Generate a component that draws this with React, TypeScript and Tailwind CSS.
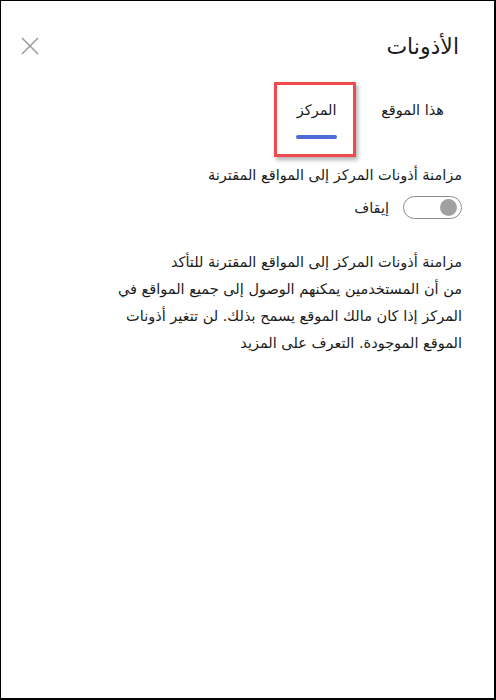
const font = { fontFamily: '"DejaVu Sans", Tahoma, sans-serif' };

export default function App() {
  return (
    <div
      dir="rtl"
      style={font}
      className="relative h-[700px] w-[496px] overflow-hidden border-t border-l border-r-2 border-b-2 border-black bg-white text-[#1b1b1b]"
    >
      {/* Header */}
      <div className="flex items-start justify-between pr-[35px] pl-[20px] pt-[31px]">
        <h1 className="text-[22px] leading-[30px]">الأذونات</h1>
        <button className="mt-[5px] text-[#9a9a9a]" aria-label="إغلاق">
          <svg width="18" height="18" viewBox="0 0 18 18" fill="none" stroke="currentColor" strokeWidth="1.5">
            <path d="M1 1L17 17M17 1L1 17" />
          </svg>
        </button>
      </div>

      {/* Tabs */}
      <div className="mt-[36px] flex gap-[44px] pr-[50px] text-[14.5px]">
        <div className="flex flex-col items-center">
          <span className="leading-[24px]">هذا الموقع</span>
        </div>
        <div className="relative flex flex-col items-center">
          <span className="leading-[24px]">المركز</span>
          <span className="mt-[13px] h-[4px] w-[41px] rounded-full bg-[#4f6bd8]" />
          {/* annotation highlight */}
          <div className="absolute -top-[16px] -left-[22px] h-[75px] w-[82px] border-[3px] border-[#f04a4e] shadow-[2px_3px_4px_rgba(0,0,0,0.3)]" />
        </div>
      </div>

      {/* Sync setting */}
      <div className="mt-[25px] pr-[32px] text-[14.5px]">
        <p className="leading-[22px]">مزامنة أذونات المركز إلى المواقع المقترنة</p>
        <div className="mt-[10px] flex items-center gap-[14px]">
          <div className="flex h-[23px] w-[59px] items-center justify-start rounded-full border border-[#8c8c8c] pr-[4px]">
            <span className="h-[17px] w-[17px] rounded-full bg-[#a0a0a0]" />
          </div>
          <span className="leading-[22px]">إيقاف</span>
        </div>
      </div>

      <p className="mt-[30px] pr-[32px] text-[14.5px] leading-[27px] whitespace-nowrap">
        مزامنة أذونات المركز إلى المواقع المقترنة للتأكد
        <br />
        من أن المستخدمين يمكنهم الوصول إلى جميع المواقع في
        <br />
        المركز إذا كان مالك الموقع يسمح بذلك. لن تتغير أذونات
        <br />
        الموقع الموجودة. التعرف على المزيد
      </p>
    </div>
  );
}
